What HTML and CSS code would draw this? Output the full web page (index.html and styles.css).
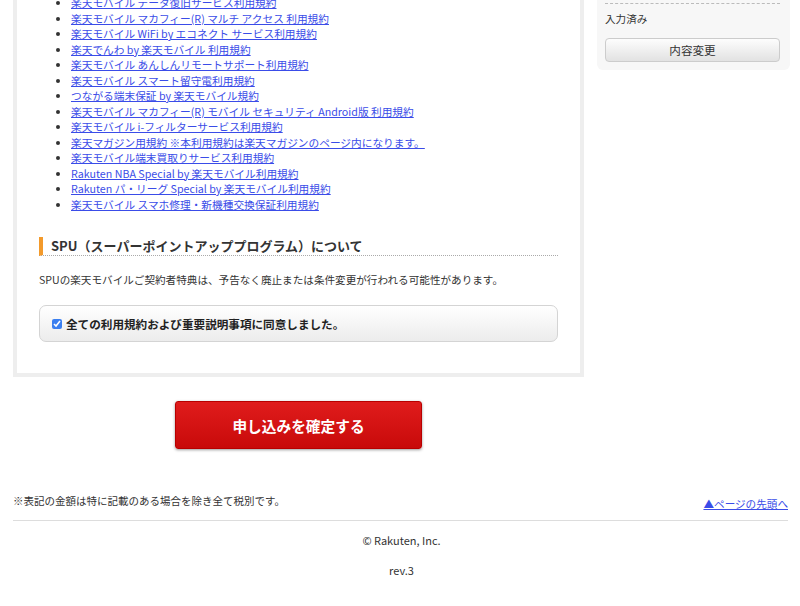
FILE: index.html
```html
<!DOCTYPE html>
<html lang="ja">
<head>
  <meta charset="UTF-8"/>
  <meta name="viewport" content="width=device-width, initial-scale=1.0"/>
  <title>お申し込み内容確認 - 楽天モバイル</title>
  <link rel="stylesheet" href="styles.css">
</head>
<body>
  <div class="page">
    <div class="layout">
      <div class="column">
        <section class="main">
          <ul class="terms">
            <li><a href="#">楽天モバイル データ復旧サービス利用規約</a></li>
            <li><a href="#">楽天モバイル マカフィー(R) マルチ アクセス 利用規約</a></li>
            <li><a href="#">楽天モバイル WiFi by エコネクト サービス利用規約</a></li>
            <li><a href="#">楽天でんわ by 楽天モバイル 利用規約</a></li>
            <li><a href="#">楽天モバイル あんしんリモートサポート利用規約</a></li>
            <li><a href="#">楽天モバイル スマート留守電利用規約</a></li>
            <li><a href="#">つながる端末保証 by 楽天モバイル規約</a></li>
            <li><a href="#">楽天モバイル マカフィー(R) モバイル セキュリティ Android版 利用規約</a></li>
            <li><a href="#">楽天モバイル i-フィルターサービス利用規約</a></li>
            <li><a href="#">楽天マガジン用規約 ※本利用規約は楽天マガジンのページ内になります。</a></li>
            <li><a href="#">楽天モバイル端末買取りサービス利用規約</a></li>
            <li><a href="#">Rakuten NBA Special by 楽天モバイル利用規約</a></li>
            <li><a href="#">Rakuten パ・リーグ Special by 楽天モバイル利用規約</a></li>
            <li><a href="#">楽天モバイル スマホ修理・新機種交換保証利用規約</a></li>
          </ul>

          <h3 class="sub-title">SPU（スーパーポイントアッププログラム）について</h3>
          <p class="note">SPUの楽天モバイルご契約者特典は、予告なく廃止または条件変更が行われる可能性があります。</p>

          <label class="agree">
            <input type="checkbox" checked/>
            <span>全ての利用規約および重要説明事項に同意しました。</span>
          </label>
        </section>

        <div class="submit-area">
          <button class="btn-submit">申し込みを確定する</button>
        </div>
      </div>

      <aside class="side">
        <div class="side-status">入力済み</div>
        <button class="btn-change">内容変更</button>
      </aside>
    </div>

    <div class="page-foot">
      <p>※表記の金額は特に記載のある場合を除き全て税別です。</p>
      <a href="#" class="to-top">▲ページの先頭へ</a>
    </div>

    <footer class="footer">
      <p>© Rakuten, Inc.</p>
      <p>rev.3</p>
    </footer>
  </div>
</body>
</html>
```

FILE: styles.css
```css
body { margin: 0; font-family: "Noto Sans CJK JP", "Noto Sans", sans-serif; color: #333; background-color: #fff; }
a { color: #3a4ce8; }
.page { margin-top: -13px; padding: 0 10px 0 13px; }
.layout { display: flex; align-items: flex-start; gap: 13px; }
.column { width: 571px; flex-shrink: 0; }
.main {
  border: 4px solid #eee;
  padding: 0 22px 31px;
  background-color: #fff;
}
.terms {
  margin: 4px 0 0;
  padding-left: 32px;
  font-size: 10.7px;
  line-height: 15.5px;
}
.sub-title {
  margin: 25px 0 0;
  border-left: 4px solid #f39a2b;
  border-bottom: 1px dotted #aaa;
  padding-left: 8px;
  font-size: 13px;
  line-height: 18px;
  color: #333;
}
.note {
  margin: 16px 0 0;
  font-size: 10.6px;
  line-height: 16px;
}
.agree {
  display: flex;
  align-items: center;
  gap: 4px;
  margin-top: 17px;
  height: 37px;
  box-sizing: border-box;
  padding: 0 12px;
  border: 1px solid #d4d4d4;
  border-radius: 7px;
  background: linear-gradient(#fff, #ececec);
  font-size: 11.6px;
  font-weight: bold;
  color: #222;
}
.agree input { margin: 0; width: 10px; height: 10px; accent-color: #3b7ff0; }
.submit-area { display: flex; justify-content: center; padding-top: 24px; }
.btn-submit {
  width: 247px;
  height: 48px;
  border: 1px solid #b80000;
  border-radius: 3px;
  background: linear-gradient(#e01c1c, #c80a0a);
  box-shadow: 0 1px 3px rgba(0, 0, 0, 0.4);
  color: #fff;
  font-family: inherit;
  font-size: 14.7px;
  font-weight: bold;
}
.side {
  width: 193px;
  box-sizing: border-box;
  padding: 0 10px 8px 8px;
  background-color: #f7f7f7;
  border-radius: 6px;
}
.side-status {
  margin-top: 16px;
  border-top: 1px dashed #bbb;
  padding-top: 7px;
  font-size: 10.6px;
  line-height: 16px;
}
.btn-change {
  display: block;
  width: 100%;
  height: 24px;
  margin-top: 11px;
  border: 1px solid #ccc;
  border-radius: 4px;
  background: linear-gradient(#fdfdfd, #e2e2e2);
  color: #333;
  font-family: inherit;
  font-size: 11.6px;
}
.page-foot {
  display: flex;
  justify-content: space-between;
  align-items: flex-end;
  margin: 44px 2px 0 0;
  padding-bottom: 9px;
  border-bottom: 1px solid #ddd;
  font-size: 10.5px;
}
.page-foot p { margin: 0 0 2px; line-height: 16px; }
.to-top { font-size: 10.6px; line-height: 14px; }
.footer { text-align: center; font-size: 11px; }
.footer p { margin: 11px 0 0; line-height: 16px; }
.footer p + p { margin-top: 14px; }
```
